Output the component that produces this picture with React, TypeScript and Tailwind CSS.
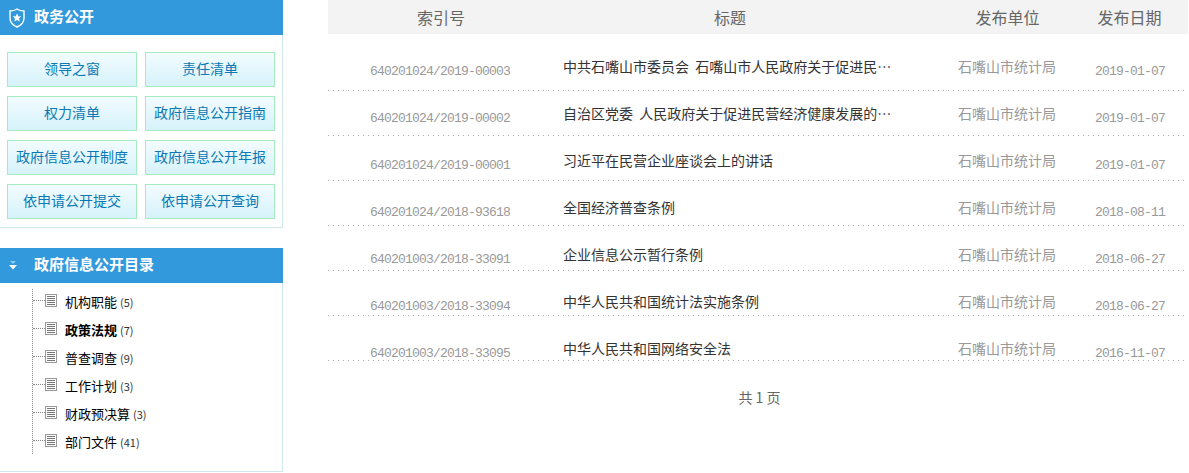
import type { ReactNode } from 'react'

const FONT = '[font-family:"Noto_Sans_CJK_SC","Liberation_Sans",sans-serif]'

const BUTTONS = [
  '领导之窗',
  '责任清单',
  '权力清单',
  '政府信息公开指南',
  '政府信息公开制度',
  '政府信息公开年报',
  '依申请公开提交',
  '依申请公开查询',
]

const TREE = [
  { name: '机构职能', count: 5 },
  { name: '政策法规', count: 7, active: true },
  { name: '普查调查', count: 9 },
  { name: '工作计划', count: 3 },
  { name: '财政预决算', count: 3 },
  { name: '部门文件', count: 41 },
]

const ROWS = [
  { no: '640201024/2019-00003', title: '中共石嘴山市委员会\u00a0\u00a0石嘴山市人民政府关于促进民营经济健康发展的意见', date: '2019-01-07' },
  { no: '640201024/2019-00002', title: '自治区党委\u00a0\u00a0人民政府关于促进民营经济健康发展的若干意见', date: '2019-01-07' },
  { no: '640201024/2019-00001', title: '习近平在民营企业座谈会上的讲话', date: '2019-01-07' },
  { no: '640201024/2018-93618', title: '全国经济普查条例', date: '2018-08-11' },
  { no: '640201003/2018-33091', title: '企业信息公示暂行条例', date: '2018-06-27' },
  { no: '640201003/2018-33094', title: '中华人民共和国统计法实施条例', date: '2018-06-27' },
  { no: '640201003/2018-33095', title: '中华人民共和国网络安全法', date: '2016-11-07' },
]

function PanelHead({ icon, children }: { icon: ReactNode; children: ReactNode }) {
  return (
    <div className="flex h-[35px] items-center bg-[#3399dd] text-white">
      <div className="flex w-[34px] shrink-0 justify-center pr-[1px]">{icon}</div>
      <span className="pb-[2px] text-[15px] font-bold">{children}</span>
    </div>
  )
}

function ShieldIcon() {
  return (
    <svg width="16" height="20" viewBox="0 0 16 20">
      <path d="M8 1 C6 2.4 3.5 3 1 3 V10 C1 14.5 4.5 17.5 8 19 C11.5 17.5 15 14.5 15 10 V3 C12.5 3 10 2.4 8 1 Z" fill="none" stroke="#fff" strokeWidth="1.4" />
      <path d="M8 5.5 L9.3 8.3 L12.2 8.6 L10 10.6 L10.7 13.5 L8 12 L5.3 13.5 L6 10.6 L3.8 8.6 L6.7 8.3 Z" fill="#fff" />
    </svg>
  )
}

function ArrowsIcon() {
  return (
    <svg width="8" height="9" viewBox="0 0 8 9" className="mr-[8px]">
      <path d="M1 0 H7 L4 3 Z" fill="#8ecbf0" />
      <path d="M0 4 H8 L4 8.5 Z" fill="#fff" />
    </svg>
  )
}

function DocIcon() {
  return (
    <svg width="12" height="13" viewBox="0 0 12 13" className="shrink-0">
      <rect x="0.5" y="0.5" width="11" height="12" fill="#fff" stroke="#999" />
      <path d="M2 2.5 H10 M2 4.5 H10 M2 6.5 H10 M2 8.5 H10 M2 10.5 H10" stroke="#777" strokeWidth="1" />
    </svg>
  )
}

export default function App() {
  return (
    <div className={`flex w-[1189px] h-[473px] overflow-hidden bg-white ${FONT}`}>
      <aside className="w-[283px] shrink-0">
        <PanelHead icon={<ShieldIcon />}>政务公开</PanelHead>
        <div className="h-[193px] border-r border-b border-[#cfe8ee] pt-[17px] pl-[7px]">
          <div className="grid w-[268px] grid-cols-2 gap-x-[8px] gap-y-[9px]">
            {BUTTONS.map((b) => (
              <div
                key={b}
                className="flex h-[35px] items-center justify-center border border-[#a5ecc0] bg-gradient-to-b from-[#f2fcff] to-[#d6f2fb] pb-[2px] text-[14px] text-[#0a78b4]"
              >
                {b}
              </div>
            ))}
          </div>
        </div>

        <div className="mt-[20px]">
          <PanelHead icon={<ArrowsIcon />}>政府信息公开目录</PanelHead>
          <div className="h-[189px] border-r border-b border-[#cfe8ee] pt-[6px] pl-[32px]">
            <ul className="h-[165px] w-max border-l border-dotted border-[#888]">
              {TREE.map((t) => (
                <li key={t.name} className="flex h-[28px] items-center">
                  <span className="mb-[5px] h-0 w-[12px] border-t border-dotted border-[#888]" />
                  <span className="mb-[5px]"><DocIcon /></span>
                  <span className={`mb-[2px] ml-[8px] text-[13px] text-black ${t.active ? 'font-bold' : ''}`}>{t.name}</span>
                  <span className="mb-[2px] ml-[3px] text-[11px] text-[#333]">({t.count})</span>
                </li>
              ))}
            </ul>
          </div>
        </div>
      </aside>

      <main className="ml-[45px] w-[860px] shrink-0">
        <div className="flex h-[34px] items-center bg-[#f3f3f3] text-[16px] text-[#666]">
          <div className="w-[226px] text-center">索引号</div>
          <div className="w-[352px] text-center">标题</div>
          <div className="w-[176px] pl-[27px] text-center">发布单位</div>
          <div className="flex-1 pr-[11px] text-center">发布日期</div>
        </div>

        <div className="grid">
          <div className="[grid-area:1/1]">
            {ROWS.map((r, i) => (
              <div
                key={r.no}
                className={`${i === 0 ? 'h-[57px]' : 'h-[45px]'} flex items-end`}
              >
                <div className="h-px w-full bg-[linear-gradient(to_right,#aaaaaa_1px,transparent_1px)] bg-[length:5px_1px]" />
              </div>
            ))}
          </div>
          <div className="pt-[20px] [grid-area:1/1]">
            {ROWS.map((r) => (
              <div key={r.no} className="flex h-[47px] items-start">
                <div className="mt-[8px] w-[235px] pl-[42px] text-[13px] leading-[20px] tracking-[-0.8px] text-[#999] [font-family:'Liberation_Mono',monospace]">{r.no}</div>
                <div className="w-[395px]">
                  <div className="w-[330px] truncate text-[14px] leading-[24px] text-[#333]">{r.title}</div>
                </div>
                <div className="w-[137px] text-[14px] leading-[24px] text-[#999]">石嘴山市统计局</div>
                <div className="mt-[8px] text-[13px] leading-[20px] tracking-[-0.8px] text-[#999] [font-family:'Liberation_Mono',monospace]">{r.date}</div>
              </div>
            ))}
          </div>
        </div>

        <div className="mt-[4px] pl-[3px] text-center text-[14px] text-[#666]">共 1 页</div>
      </main>
    </div>
  )
}
